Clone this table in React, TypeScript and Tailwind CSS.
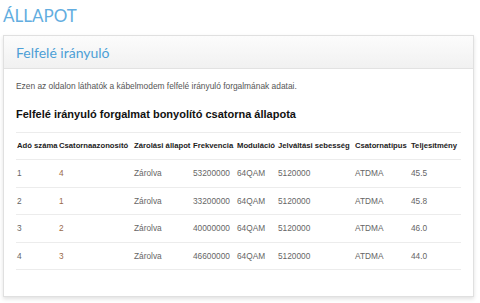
import React from 'react';

// Upstream channel rows shown in the status table
type ChannelRow = {
  index: string;
  channelId: string;
  lock: string;
  frequency: string;
  modulation: string;
  symbolRate: string;
  channelType: string;
  power: string;
};

const rows: ChannelRow[] = [
  { index: '1', channelId: '4', lock: 'Zárolva', frequency: '53200000', modulation: '64QAM', symbolRate: '5120000', channelType: 'ATDMA', power: '45.5' },
  { index: '2', channelId: '1', lock: 'Zárolva', frequency: '33200000', modulation: '64QAM', symbolRate: '5120000', channelType: 'ATDMA', power: '45.8' },
  { index: '3', channelId: '2', lock: 'Zárolva', frequency: '40000000', modulation: '64QAM', symbolRate: '5120000', channelType: 'ATDMA', power: '46.0' },
  { index: '4', channelId: '3', lock: 'Zárolva', frequency: '46600000', modulation: '64QAM', symbolRate: '5120000', channelType: 'ATDMA', power: '44.0' },
];

const headers = [
  'Adó száma',
  'Csatornaazonosító',
  'Zárolási állapot',
  'Frekvencia',
  'Moduláció',
  'Jelváltási sebesség',
  'Csatornatípus',
  'Teljesítmény',
];

// fixed column widths so the header labels sit tight like the auto table
const cols = 'grid grid-cols-[42px_75px_59px_44px_41px_77px_56px_50px]';

export default function App() {
  return (
    <div className="w-[480px] h-[303px] bg-white overflow-hidden font-['Liberation_Sans',Arial,sans-serif]">
      <h1 className="pl-[3px] pt-[6px] h-[35px] text-[17px] leading-[20px] text-[#62ade0] font-['Lato',sans-serif]">
        ÁLLAPOT
      </h1>

      <div className="ml-[3px] w-[471px] h-[262px] border border-[#e0e0e0] shadow-[0_2px_4px_rgba(0,0,0,0.12)]">
        {/* panel header */}
        <div className="h-[33px] border-b border-[#e2e2e2] bg-gradient-to-b from-[#fcfcfc] to-[#f1f1f1] pl-[12px] pt-[8px]">
          <h2 className="text-[14px] leading-[17px] text-[#4d9fd6] font-['Lato',sans-serif]">Felfelé irányuló</h2>
        </div>

        <div className="px-[12px]">
          <p className="mt-[12px] text-[8.4px] leading-[11px] text-[#555]">
            Ezen az oldalon láthatók a kábelmodem felfelé irányuló forgalmának adatai.
          </p>

          <h3 className="mt-[15px] text-[11px] leading-[14px] font-bold text-[#111]">
            Felfelé irányuló forgalmat bonyolító csatorna állapota
          </h3>

          <div className="mt-[11px] w-[445px] border-t border-[#ececec]">
            <div className={`${cols} h-[27px] items-center border-b border-[#ececec] pl-[1px] text-[7.7px] font-bold text-[#222] whitespace-nowrap`}>
              {headers.map((h) => (
                <span key={h}>{h}</span>
              ))}
            </div>
            {rows.map((r) => (
              <div
                key={r.index}
                className={`${cols} h-[27.5px] items-center border-b border-[#ececec] pl-[1px] text-[8.3px] text-[#666] whitespace-nowrap`}
              >
                <span>{r.index}</span>
                <span className="text-[#9a6a48]">{r.channelId}</span>
                <span>{r.lock}</span>
                <span>{r.frequency}</span>
                <span>{r.modulation}</span>
                <span>{r.symbolRate}</span>
                <span>{r.channelType}</span>
                <span>{r.power}</span>
              </div>
            ))}
          </div>
        </div>
      </div>
    </div>
  );
}
